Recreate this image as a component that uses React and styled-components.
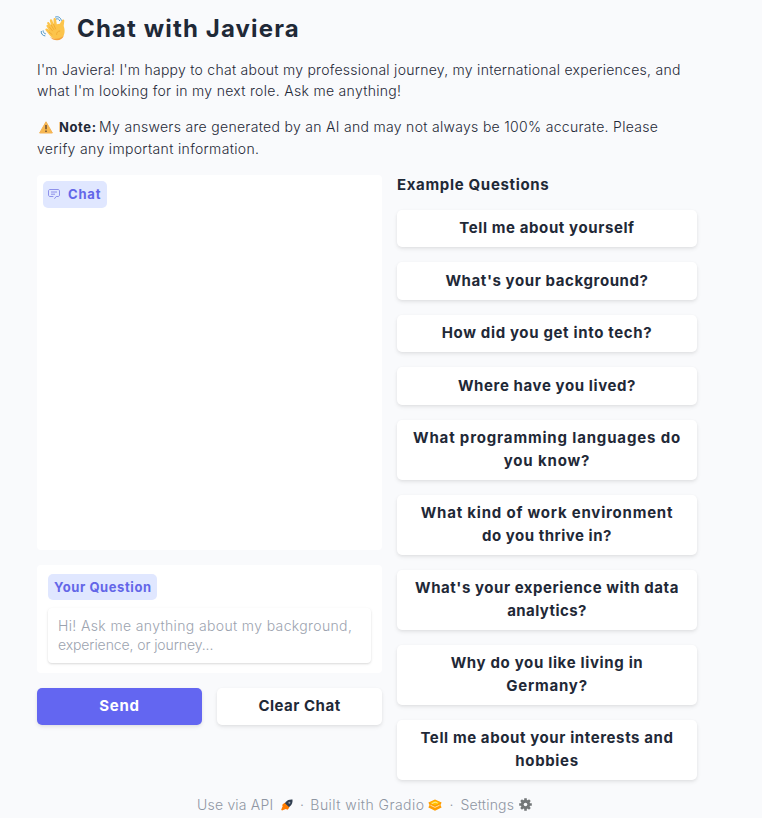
import React from 'react';
import styled, { createGlobalStyle } from 'styled-components';

const Global = createGlobalStyle`
  *, *::before, *::after { box-sizing: border-box; }
  body {
    margin: 0;
    background: #f9fafc;
    color: #1f2937;
    font-family: Inter, "Open Sans", sans-serif;
    overflow: hidden;
  }
  h1, h2, p { margin: 0; }
`;

const Page = styled.main`
  width: 660px;
  margin-left: 37px;
  padding-top: 10px;
  height: 818px;
`;
const Title = styled.h1`
  display: flex;
  align-items: center;
  height: 37px;
  padding-left: 3px;
  gap: 10px;
  font-size: 24px;
  font-weight: 700;
`;
const Line = styled.span`
  display: block;
  white-space: pre;
  letter-spacing: ${(p) => p.$track || 0}px;
`;
const Inline = styled(Line)`
  display: inline-block;
`;
const Paragraph = styled.p`
  margin-top: ${(p) => p.$top}px;
  font-size: 14px;
  font-weight: 300;
  line-height: ${(p) => p.$leading}px;
  color: #1f2937;
`;
const NoteRow = styled.span`
  display: flex;
  align-items: center;
  height: 22px;
  padding-left: 2px;
  svg { margin-right: 6px; flex: none; }
`;
const Strong = styled.strong`
  font-size: 13px;
  font-weight: 700;
  letter-spacing: 0.6px;
  margin-right: 2.5px;
  color: #1f2937;
`;
const Columns = styled.div`
  display: grid;
  grid-template-columns: 345px 300px;
  gap: 15px;
  margin-top: 15px;
`;
const ChatColumn = styled.section`
  display: flex;
  flex-direction: column;
  gap: 15px;
`;
const Panel = styled.div`
  height: ${(p) => p.$height}px;
  padding: ${(p) => p.$pad};
  background: #fff;
  border-radius: 4px;
`;
const Badge = styled.div`
  display: inline-flex;
  align-items: center;
  width: ${(p) => p.$width}px;
  height: ${(p) => p.$height}px;
  padding: 0 6px ${(p) => p.$lift || 0}px;
  gap: 8px;
  border-radius: 5px;
  background: #e0e7ff;
  color: #6366e8;
  font-size: 13px;
  font-weight: 700;
  vertical-align: top;
  svg { flex: none; margin-left: -1px; }
`;
const Prompt = styled.div`
  margin-top: 8px;
  height: 55px;
  padding: 8px 10px;
  border-radius: 4px;
  background: #fff;
  box-shadow: 0 1px 3px rgba(0, 0, 0, 0.1), 0 1px 2px rgba(0, 0, 0, 0.06);
  color: #9ca3af;
  font-size: 14px;
  font-weight: 300;
  line-height: 19px;
`;
const Actions = styled.div`
  display: grid;
  grid-template-columns: 1fr 1fr;
  gap: 15px;
`;
const Button = styled.button`
  display: block;
  width: 100%;
  margin: 0;
  padding: 7.5px 10px;
  border: 0;
  border-radius: 5px;
  background: ${(p) => (p.$primary ? '#6366f1' : '#fff')};
  color: ${(p) => (p.$primary ? '#fff' : '#1f2937')};
  box-shadow: 0 2px 4px rgba(0, 0, 0, 0.08), 0 1px 3px rgba(0, 0, 0, 0.04);
  font-family: inherit;
  font-size: 15px;
  font-weight: 700;
  line-height: 22.5px;
  text-align: center;
`;
const Examples = styled.aside`
  display: flex;
  flex-direction: column;
  gap: 15px;
`;
const Heading = styled.h2`
  height: 19.75px;
  font-size: 15px;
  font-weight: 700;
  line-height: 20px;
`;
const Footer = styled.footer`
  display: flex;
  align-items: center;
  height: 20px;
  margin: 15px 0 0 160px;
  color: #8f96a3;
  font-size: 14px;
  font-weight: 300;
  svg { flex: none; }
`;
const FooterLink = styled.span`
  display: flex;
  align-items: center;
  gap: ${(p) => p.$gap}px;
`;
const Dot = styled.span`
  width: ${(p) => p.$width}px;
  text-align: center;
`;

const Wave = () => (
  <svg width="27" height="27" viewBox="0 0 27 27" fill="none">
    <path d="M8 11.5 5.8 8.3c-.8-1.3.9-2.4 1.8-1.2l2 2.6-1.2-4.3c-.4-1.7 1.7-2.3 2.3-.8l1.4 4.2-.1-5c0-1.7 2.2-1.8 2.5-.2l.8 5.2 3-.6 2.2-3.6c.9-1.2 2.6-.6 2.3.9l-.6 5.1c.6 2.2 1.2 4 .8 6.3-.6 4.6-3.8 6.8-7.5 6.8-3.1 0-5.2-1.3-7.1-3.6l-4.3-5.3c-.9-1.3.6-2.6 1.9-1.5l1.6 1.2-2.4-3.3c-.9-1.5.9-2.5 1.8-1.4Z" fill="#fcc44b" transform="translate(1.5 .5)" />
    <path d="m11.2 10.2 2.7 4.4m-.3-5.3 2 4.7m-6.3 3.3 2.8 2.2m-2.6-7.4 3 3.8m7.3.1c-2.2.2-3.4 1.7-3.2 3.5" stroke="#efa52f" strokeWidth=".8" strokeLinecap="round" />
    <path d="M9.9 21.7c3.9 3 10.8 2.6 14-1.5-.9 3.5-3.8 5.1-6.9 5.1-3.1 0-5.2-1.3-7.1-3.6Z" fill="#f5a13b" />
    <path d="M15.5 2c2.7-1 5.3.5 5.8 3.3M16.4 3.9c1.6-.5 3 .3 3.3 1.8M1.2 16.4c-.3 2.3 1.4 4.3 3.7 4.5M3.1 15.8c0 1.5.9 2.7 2.3 3" stroke="#4a94c7" strokeWidth="1" strokeLinecap="round" />
  </svg>
);
const Warning = () => (
  <svg width="14" height="13" viewBox="0 0 14 13">
    <path d="M7 .8 13.4 12H.6Z" fill="#f8b84e" stroke="#f3b256" strokeWidth="1" strokeLinejoin="round" />
    <path d="M7 4v4.2M7 9.5v1.4" stroke="#684a35" strokeWidth="1.5" />
  </svg>
);
const ChatIcon = () => (
  <svg width="12" height="12" viewBox="0 0 12 12" fill="none" stroke="#8587e8" strokeWidth=".9">
    <path d="M2 1.5h8c.8 0 1.5.6 1.5 1.4v4.2c0 .8-.7 1.4-1.5 1.4H8.2L6.4 10.8M5.4 8.5H2C1.2 8.5.5 7.9.5 7.1V2.9c0-.8.7-1.4 1.5-1.4M3 4h6M3 6.2h4" />
  </svg>
);
const Rocket = () => (
  <svg width="12" height="12" viewBox="0 0 12 12">
    <path d="M5 2.7C6.7 1 8.4.3 11.5.5c.2 3.1-.5 4.8-2.2 6.5L7.5 8.5 3.5 4.5Z" fill="#313e50" />
    <path d="m3.5 3.7 4.9 4.9-1.9 2.2-1.7-.9-3.8 1.6-.8-.7 1.5-3.8-.6-1.1Z" fill="#ff7c00" />
    <circle cx="8.4" cy="3.7" r="1" fill="#9aa4ae" />
  </svg>
);
const Gradio = () => (
  <svg width="14" height="12" viewBox="0 0 14 12">
    <path d="M7 .4 13.6 3.6 12.5 6l1.1 2.6L7 11.7.4 8.6 1.5 6 .4 3.6Z" fill="#ff9d00" />
    <path d="m2 3.8 5-2.3 5 2.3-5 2.4Z" fill="#ffc400" />
    <path d="m3.6 4.7 3.5-1.6 2.6 1M2.4 6.2 7 8.4l4.6-2.2" fill="none" stroke="#fff3ce" strokeWidth=".8" />
  </svg>
);
const Gear = () => (
  <svg width="13" height="13" viewBox="0 0 13 13">
    <g stroke="#737778" strokeWidth="2.6">
      <path d="M6.5.2v12.6M.2 6.5h12.6M2.1 2.1l8.8 8.8M10.9 2.1l-8.8 8.8" />
    </g>
    <circle cx="6.5" cy="6.5" r="4.7" fill="#737778" />
    <circle cx="6.5" cy="6.5" r="1.8" fill="#f9fafc" />
  </svg>
);

const questions = [
  [['Tell me about yourself', 0.6]],
  [["What's your background?", 0.6]],
  [['How did you get into tech?', 0.65]],
  [['Where have you lived?', 0.6]],
  [['What programming languages do', 0.84], ['you know?', 0.85]],
  [['What kind of work environment', 0.79], ['do you thrive in?', 0.51]],
  [["What's your experience with data", 0.55], ['analytics?', 0.43]],
  [['Why do you like living in', 0.66], ['Germany?', 0.8]],
  [['Tell me about your interests and', 0.6], ['hobbies', 0.65]],
];

export default function App() {
  return (
    <Page>
      <Global />
      <Title><Wave /><Line $track={1.13}>Chat with Javiera</Line></Title>
      <Paragraph $top={12} $leading={21}>
        <Line $track={0.263}>I'm Javiera! I'm happy to chat about my professional journey, my international experiences, and</Line>
        <Line $track={0.305}>what I'm looking for in my next role. Ask me anything!</Line>
      </Paragraph>
      <Paragraph $top={15} $leading={22}>
        <NoteRow>
          <Warning /><Strong>Note:</Strong>
          <Line $track={0.305}>My answers are generated by an AI and may not always be 100% accurate. Please</Line>
        </NoteRow>
        <Line $track={0.34}>verify any important information.</Line>
      </Paragraph>
      <Columns>
        <ChatColumn>
          <Panel $height={375} $pad="6px">
            <Badge $width={64} $height={27} $lift={2}><ChatIcon /><Line $track={0.8}>Chat</Line></Badge>
          </Panel>
          <Panel $height={107.75} $pad="9px 11px">
            <Badge $width={109} $height={26}><Line $track={0.58}>Your Question</Line></Badge>
            <Prompt>
              <Line $track={0.36}>Hi! Ask me anything about my background,</Line>
              <Line $track={-0.1}>experience, or journey...</Line>
            </Prompt>
          </Panel>
          <Actions>
            <Button $primary><Line $track={0.75}>Send</Line></Button>
            <Button><Line $track={0.5}>Clear Chat</Line></Button>
          </Actions>
        </ChatColumn>
        <Examples>
          <Heading><Line $track={0.67}>Example Questions</Line></Heading>
          {questions.map((lines) => (
            <Button key={lines[0][0]}>
              {lines.map(([text, track]) => <Line key={text} $track={track}>{text}</Line>)}
            </Button>
          ))}
        </Examples>
      </Columns>
      <Footer>
        <FooterLink $gap={8}><Inline $track={0.2}>Use via API</Inline><Rocket /></FooterLink>
        <Dot $width={17}>·</Dot>
        <FooterLink $gap={4}><Inline $track={0.45}>Built with Gradio</Inline><Gradio /></FooterLink>
        <Dot $width={18}>·</Dot>
        <FooterLink $gap={5}><Inline $track={0.2}>Settings</Inline><Gear /></FooterLink>
      </Footer>
    </Page>
  );
}
